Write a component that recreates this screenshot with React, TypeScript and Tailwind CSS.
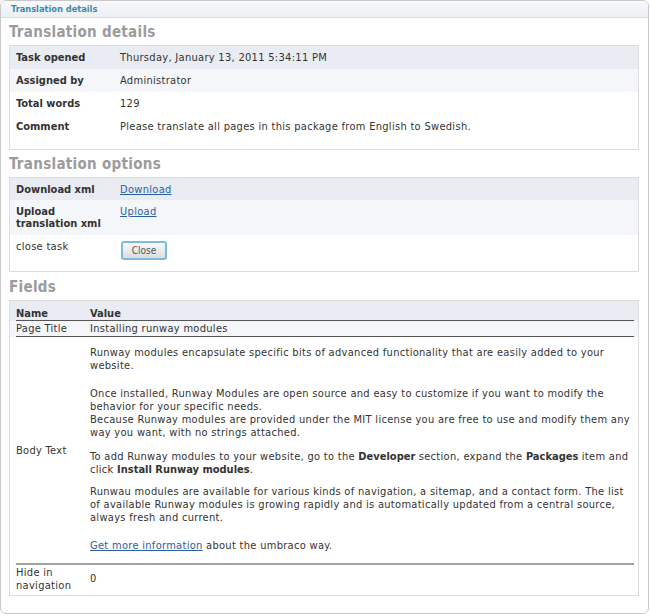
const font = "font-['DejaVu_Sans_Condensed','DejaVu_Sans',sans-serif]"

const InfoRow = ({ label, children, tint }: { label: React.ReactNode; children: React.ReactNode; tint?: string }) => (
  <div className={`flex items-center h-[23px] ${tint ?? ''}`}>
    <div className="w-[110px] pl-[6px] font-bold tracking-normal text-[#333]">{label}</div>
    <div className="text-[#333]">{children}</div>
  </div>
)

const SectionTitle = ({ children }: { children: React.ReactNode }) => (
  <h2 className="h-[27px] pt-[5px] text-[15px] leading-[19px] font-bold tracking-[0.3px] text-[#9b9b9b]">{children}</h2>
)

const App = () => {
  return (
    <div className={`w-[650px] h-[616px] bg-white ${font} text-[11px] leading-[13px] tracking-[0.3px]`}>
      <div className="w-[649px] h-[614px] border border-[#c8c8c8] rounded-[6px] overflow-hidden">
        {/* tab header */}
        <div className="h-[17px] bg-gradient-to-b from-[#f7f9fb] to-[#eceff3] border-b border-[#d8dbe0] pl-[10px] text-[9.2px] leading-[16px] font-bold tracking-normal text-[#3d8aa6]">
          Translation details
        </div>

        <div className="pl-[8px] pr-[9px]">
          <SectionTitle>Translation details</SectionTitle>
          <div className="border border-[#dcdcdc] pb-[11px]">
            <InfoRow label="Task opened" tint="bg-[#e9ecf2]">Thursday, January 13, 2011 5:34:11 PM</InfoRow>
            <InfoRow label="Assigned by" tint="bg-[#f4f6f9]">Administrator</InfoRow>
            <InfoRow label="Total words">129</InfoRow>
            <InfoRow label="Comment">Please translate all pages in this package from English to Swedish.</InfoRow>
          </div>

          <SectionTitle>Translation options</SectionTitle>
          <div className="border border-[#dcdcdc] pb-[11px]">
            <div className="flex items-center h-[22px] bg-[#e9ecf2]">
              <div className="w-[110px] pl-[6px] font-bold tracking-normal text-[#333]">Download xml</div>
              <a href="#" className="text-[#2a5ea0] underline">Download</a>
            </div>
            <div className="flex items-start pt-[6px] pb-[5px] h-[35px] bg-[#f4f6f9]">
              <div className="w-[110px] pl-[6px] font-bold tracking-normal text-[#333] leading-[12px]">Upload<br />translation xml</div>
              <a href="#" className="text-[#2a5ea0] underline leading-[12px]">Upload</a>
            </div>
            <div className="flex items-start pt-[6px]">
              <div className="w-[111px] pl-[6px] text-[#333] leading-[12px]">close task</div>
              <button className="h-[19px] w-[46px] border-2 border-[#7bbcdc] rounded-[3px] bg-gradient-to-b from-[#fafafa] to-[#dcdcdc] text-[10px] leading-[12px] tracking-normal text-[#555]">
                Close
              </button>
            </div>
          </div>

          <h2 className="h-[28px] pt-[6px] text-[15px] leading-[19px] font-bold tracking-[0.3px] text-[#9b9b9b]">Fields</h2>
          <div className="border border-[#dcdcdc] h-[296px] pl-[6px] pr-[4px] bg-[linear-gradient(to_bottom,#e9ecf2_0,#e9ecf2_20px,#f4f6f9_20px,#f4f6f9_36px,#ffffff_36px)]">
            <table className="w-full border-collapse text-[#333]">
              <thead>
                <tr className="border-b border-[#555]">
                  <th className="w-[74px] text-left font-bold tracking-normal pt-[6px] pb-0">Name</th>
                  <th className="text-left font-bold tracking-normal pt-[6px] pb-0">Value</th>
                </tr>
              </thead>
              <tbody>
                <tr className="border-b border-[#555]">
                  <td className="py-[1px]">Page Title</td>
                  <td className="py-[1px]">Installing runway modules</td>
                </tr>
                <tr className="border-b-2 border-[#a3a3a3]">
                  <td className="align-middle">Body Text</td>
                  <td className="pt-[9px] pb-[11px]">
                    <p>Runway modules encapsulate specific bits of advanced functionality that are easily added to your website.</p>
                    <p className="mt-[15px]">
                      Once installed, Runway Modules are open source and easy to customize if you want to modify the behavior for your specific needs.
                      <br />
                      Because Runway modules are provided under the MIT license you are free to use and modify them any way you want, with no strings attached.
                    </p>
                    <p className="mt-[11px]">
                      To add Runway modules to your website, go to the <b className="tracking-normal">Developer</b> section, expand the <b className="tracking-normal">Packages</b> item and click <b className="tracking-normal">Install Runway modules</b>.
                    </p>
                    <p className="mt-[9px]">
                      Runwau modules are available for various kinds of navigation, a sitemap, and a contact form. The list of available Runway modules is growing rapidly and is automatically updated from a central source, always fresh and current.
                    </p>
                    <p className="mt-[15px]">
                      <a href="#" className="text-[#2a5ea0] underline">Get more information</a> about the umbraco way.
                    </p>
                  </td>
                </tr>
                <tr>
                  <td className="align-top pt-[1px] pr-[4px]">Hide in navigation</td>
                  <td className="align-middle">0</td>
                </tr>
              </tbody>
            </table>
          </div>
        </div>
      </div>
    </div>
  )
}

export default App
